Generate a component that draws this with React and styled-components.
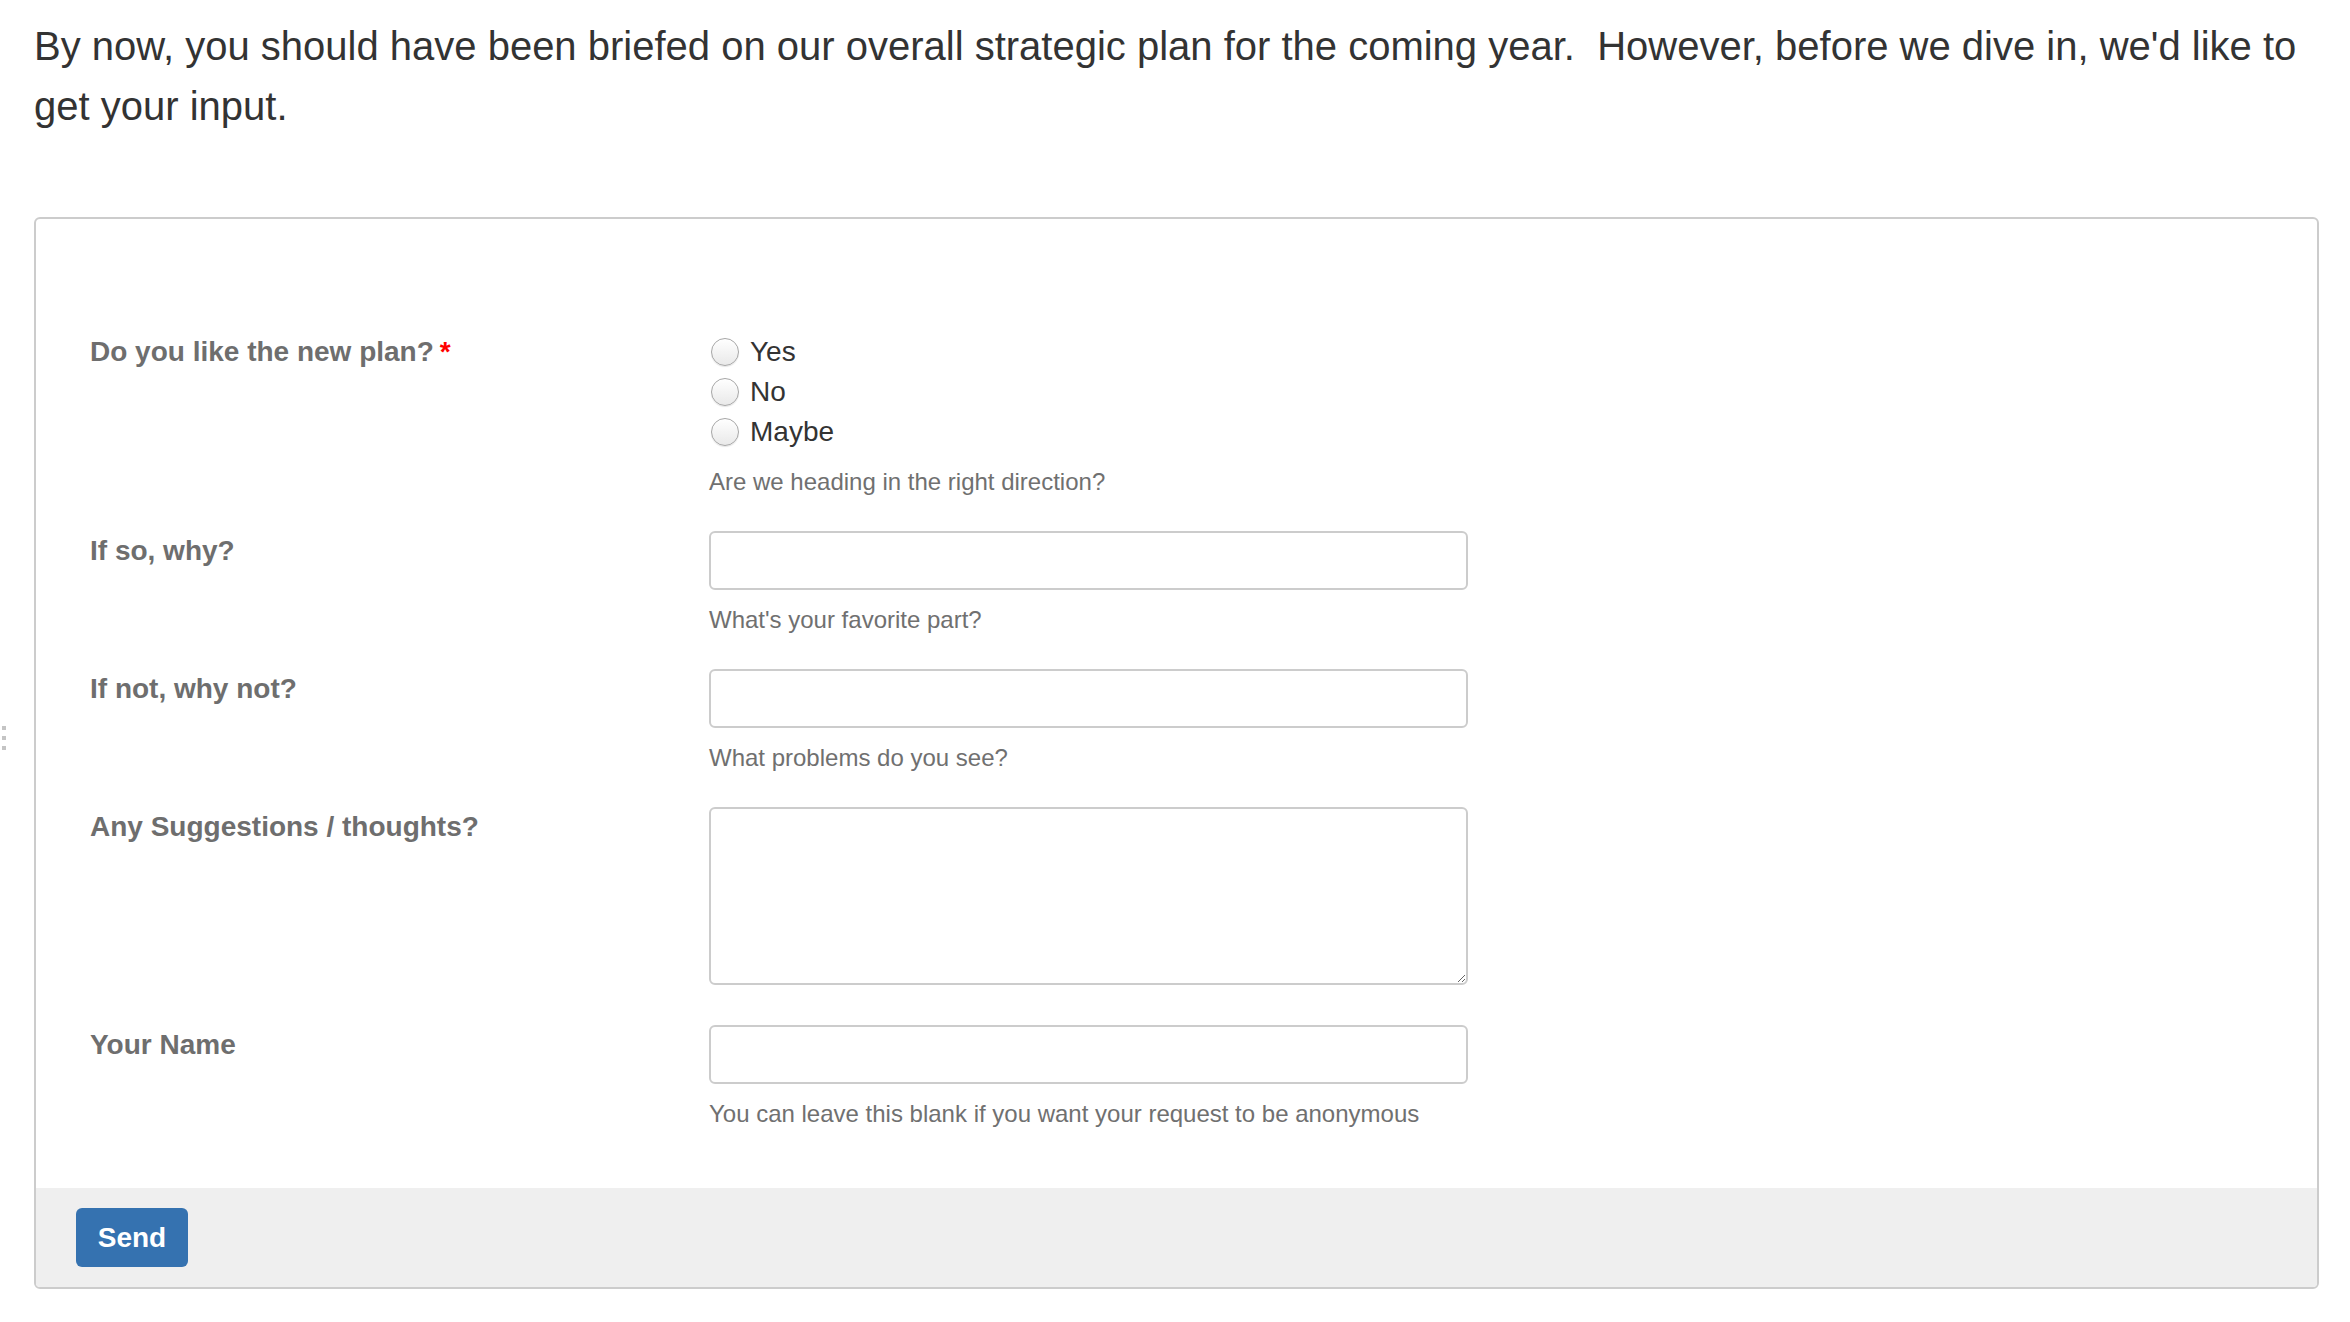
import React from "react";
import styled, { createGlobalStyle } from "styled-components";

const GlobalStyle = createGlobalStyle`
    body {
        margin: 0;
        background: #fff;
        font-family: "Liberation Sans", Arial, sans-serif;
    }
`;

const Page = styled.div`
    position: relative;
    padding: 16px 31px 30px 34px;
`;

const Grip = styled.div`
    position: absolute;
    left: 2px;
    top: 726px;
    display: flex;
    flex-direction: column;
    gap: 6px;

    span {
        width: 4px;
        height: 4px;
        background: #c4c4c4;
    }
`;

const Intro = styled.p`
    margin: 0 0 81px;
    font-size: 40px;
    line-height: 60px;
    color: #333;
`;

const Card = styled.form`
    border: 2px solid #ccc;
    border-radius: 6px;
    overflow: hidden;
`;

const Body = styled.div`
    padding: 113px 54px 25px;
`;

const Row = styled.div`
    display: grid;
    grid-template-columns: 619px 759px;
    margin-bottom: ${props => props.$gap || 32}px;
`;

const Label = styled.label`
    font-size: 28px;
    line-height: 40px;
    font-weight: bold;
    color: #6e6e6e;
`;

const Required = styled.span`
    color: #f00;
    margin-left: 6px;
`;

const Control = styled.div`
    display: flex;
    flex-direction: column;
`;

const RadioRow = styled.label`
    display: flex;
    align-items: center;
    height: 40px;
    font-size: 28px;
    color: #333;
`;

const Radio = styled.input.attrs({ type: "radio" })`
    appearance: none;
    margin: 0 11px 0 2px;
    width: 28px;
    height: 28px;
    border-radius: 50%;
    border: 1px solid #a6a6a6;
    background: linear-gradient(#ffffff, #e9e9e9);
    box-shadow: inset 0 1px 1px rgba(255, 255, 255, 0.9), 0 1px 1px rgba(0, 0, 0, 0.1);
    box-sizing: border-box;
`;

const TextInput = styled.input`
    display: block;
    box-sizing: border-box;
    width: 759px;
    height: 59px;
    margin: 0;
    border: 2px solid #ccc;
    border-radius: 6px;
    font-size: 28px;
    padding: 0 12px;
    font-family: inherit;
`;

const TextArea = styled.textarea`
    display: block;
    box-sizing: border-box;
    width: 759px;
    height: 178px;
    margin: 0;
    border: 2px solid #ccc;
    border-radius: 6px;
    font-size: 28px;
    padding: 8px 12px;
    font-family: inherit;
`;

const Help = styled.div`
    margin-top: 13px;
    font-size: 24px;
    line-height: 34px;
    color: #707070;
`;

const Footer = styled.div`
    background: #efefef;
    padding: 20px 40px;
`;

const SendButton = styled.button`
    width: 112px;
    height: 59px;
    border: none;
    border-radius: 6px;
    background: #3572b0;
    color: #fff;
    font-family: inherit;
    font-size: 28px;
    font-weight: bold;
    cursor: pointer;
`;

const options = ["Yes", "No", "Maybe"];

const App = () => {
    return (
        <Page>
            <GlobalStyle />
            <Grip>
                <span />
                <span />
                <span />
            </Grip>
            <Intro>
                By now, you should have been briefed on our overall strategic plan for the coming year.{"\u00a0"} However, before we dive in, we'd like to get your input.
            </Intro>
            <Card onSubmit={e => e.preventDefault()}>
                <Body>
                    <Row>
                        <Label>
                            Do you like the new plan?<Required>*</Required>
                        </Label>
                        <Control>
                            {options.map(opt => (
                                <RadioRow key={opt}>
                                    <Radio name="plan" value={opt} />
                                    {opt}
                                </RadioRow>
                            ))}
                            <Help>Are we heading in the right direction?</Help>
                        </Control>
                    </Row>
                    <Row>
                        <Label>If so, why?</Label>
                        <Control>
                            <TextInput type="text" />
                            <Help>What's your favorite part?</Help>
                        </Control>
                    </Row>
                    <Row>
                        <Label>If not, why not?</Label>
                        <Control>
                            <TextInput type="text" />
                            <Help>What problems do you see?</Help>
                        </Control>
                    </Row>
                    <Row $gap={40}>
                        <Label>Any Suggestions / thoughts?</Label>
                        <Control>
                            <TextArea />
                        </Control>
                    </Row>
                    <Row>
                        <Label>Your Name</Label>
                        <Control>
                            <TextInput type="text" />
                            <Help>You can leave this blank if you want your request to be anonymous</Help>
                        </Control>
                    </Row>
                </Body>
                <Footer>
                    <SendButton type="submit">Send</SendButton>
                </Footer>
            </Card>
        </Page>
    );
};

export default App;
